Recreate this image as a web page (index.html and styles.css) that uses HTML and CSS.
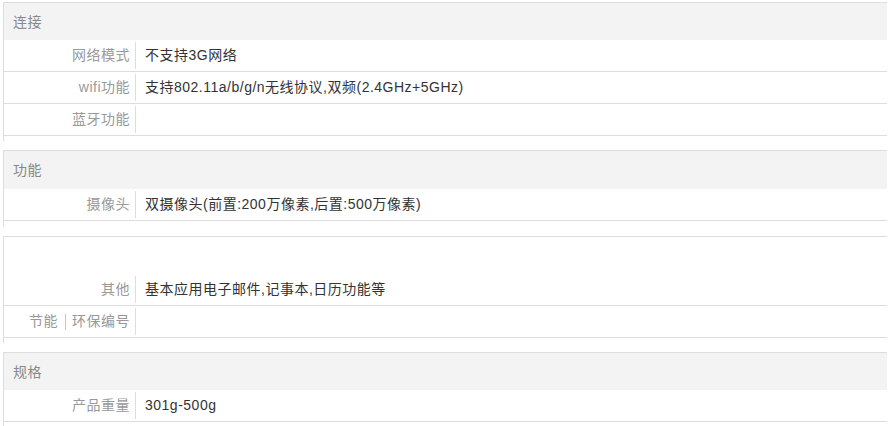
FILE: index.html
```html
<!DOCTYPE html>
<html lang="zh-CN">
<head>
<meta charset="utf-8">
<title>参数</title>
<link rel="stylesheet" href="styles.css">
</head>
<body>
<div class="specs">
  <section class="block">
    <div class="block-title">连接</div>
    <div class="row"><div class="label">网络模式</div><div class="value">不支持3G网络</div></div>
    <div class="row"><div class="label">wifi功能</div><div class="value">支持802.11a/b/g/n无线协议,双频(2.4GHz+5GHz)</div></div>
    <div class="row"><div class="label">蓝牙功能</div><div class="value"></div></div>
  </section>
  <section class="block block-b">
    <div class="block-title">功能</div>
    <div class="row"><div class="label">摄像头</div><div class="value">双摄像头(前置:200万像素,后置:500万像素)</div></div>
  </section>
  <section class="block">
    <div class="block-title blank"></div>
    <div class="row"><div class="label">其他</div><div class="value">基本应用电子邮件,记事本,日历功能等</div></div>
    <div class="row"><div class="label">节能<span class="sep"></span>环保编号</div><div class="value"></div></div>
  </section>
  <section class="block">
    <div class="block-title">规格</div>
    <div class="row"><div class="label">产品重量</div><div class="value">301g-500g</div></div>
  </section>
</div>
</body>
</html>
```
FILE: styles.css
```css
html, body {
  margin: 0;
  padding: 0;
  background: #fff;
}
body {
  font-family: "Liberation Sans", "Noto Sans CJK SC", sans-serif;
  font-size: 14px;
  letter-spacing: 0.5px;
  line-height: 18px;
  color: #333;
}
.specs {
  padding: 2px 4px 0 3px;
  display: flex;
  flex-direction: column;
  gap: 9px;
}
.block {
  border-left: 1px solid #ddd;
  border-top: 1px solid #ddd;
  padding-bottom: 5px;
}
.block-b {
  padding-bottom: 6px;
}
.block-b .block-title {
  height: 38px;
}
.block-title {
  height: 37px;
  background: #f3f3f3;
  color: #888;
  padding-left: 9px;
  display: flex;
  align-items: center;
}
.block-title.blank {
  background: #fff;
}
.row {
  display: flex;
  height: 31px;
  border-bottom: 1px solid #ddd;
  align-items: stretch;
}
.label {
  width: 126px;
  margin: 2px 0;
  padding-right: 5px;
  padding-bottom: 2px;
  box-sizing: content-box;
  border-right: 1px solid #ddd;
  color: #999;
  text-align: right;
  display: flex;
  align-items: center;
  justify-content: flex-end;
}
.sep {
  display: inline-block;
  width: 1px;
  height: 16px;
  background: #d6c2a2;
  margin: 2px 6px 0 7px;
}
.value {
  flex: 1;
  padding-left: 9px;
  padding-bottom: 2px;
  display: flex;
  align-items: center;
}
```
